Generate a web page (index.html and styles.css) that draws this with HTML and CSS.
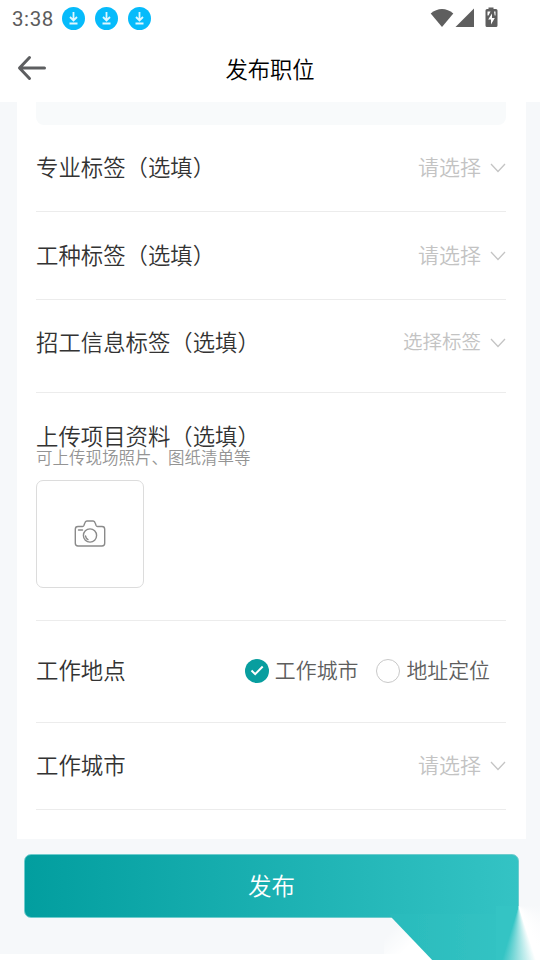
FILE: index.html
```html
<!DOCTYPE html>
<html lang="zh-CN">
<head>
<meta charset="utf-8">
<title>发布职位</title>
<link rel="stylesheet" href="styles.css">
</head>
<body>
<div class="status">
  <span class="time">3:38</span>
  <div class="downloads">
    <svg viewBox="0 0 23 23"><circle cx="11.5" cy="11.5" r="11.5"/><path d="M11.5 5v8M8 10l3.5 3.5L15 10M7.5 16.5h8"/></svg>
    <svg viewBox="0 0 23 23"><circle cx="11.5" cy="11.5" r="11.5"/><path d="M11.5 5v8M8 10l3.5 3.5L15 10M7.5 16.5h8"/></svg>
    <svg viewBox="0 0 23 23"><circle cx="11.5" cy="11.5" r="11.5"/><path d="M11.5 5v8M8 10l3.5 3.5L15 10M7.5 16.5h8"/></svg>
  </div>
  <svg class="signals" viewBox="0 0 68 22">
    <path d="M.7 6.500C7.500 .5 16.500 .5 23.300 6.500L12 20Z"/>
    <path d="M25.500 20L44 1.500V20Z"/>
    <path d="M58.500 .500h5v1.500h2.500q1.500 0 1.500 1.500v15q0 1.500-1.500 1.500h-9q-1.500 0-1.500-1.500V3.500q0-1.500 1.500-1.500H58.500z"/>
    <path class="bolt" d="M62 6.500L58.200 12.500h2.800v5L64.800 11H62zM57.500 4.500h3L58.500 8.500h-1zM64 4.500h1.500V8.500h-.8z"/>
  </svg>
</div>
<header class="nav">
  <svg class="back" viewBox="0 0 30 26"><path d="M27.500 13H3M12.500 2.500L2.500 13L12.500 23.500"/></svg>
  <h1>发布职位</h1>
</header>
<main class="content">
  <section class="card">
    <div class="field-end"></div>
    <div class="row"><span class="label">专业标签（选填）</span><span class="value">请选择</span><svg class="chevron" viewBox="0 0 16 10"><path d="M1 1l7 7.500L15 1"/></svg></div>
    <div class="row"><span class="label">工种标签（选填）</span><span class="value">请选择</span><svg class="chevron" viewBox="0 0 16 10"><path d="M1 1l7 7.500L15 1"/></svg></div>
    <div class="row row-tags"><span class="label">招工信息标签（选填）</span><span class="value small">选择标签</span><svg class="chevron" viewBox="0 0 16 10"><path d="M1 1l7 7.500L15 1"/></svg></div>
    <div class="upload">
      <div class="label">上传项目资料（选填）</div>
      <div class="hint">可上传现场照片、图纸清单等</div>
      <div class="picker">
        <svg viewBox="0 0 32 28"><path d="M4 6.500h4.500q1 0 1.400-1L10.800 3q.6-2 2-2h6.400q1.400 0 2 2l.9 2.500q.4 1 1.400 1H28q2.700 0 2.700 2.700v14.100q0 2.700-2.700 2.700H4q-2.700 0-2.700-2.700V9.200Q1.300 6.500 4 6.500z"/><circle cx="16" cy="15.500" r="6.600"/><path d="M4.500 10h4M11.500 16q.5 2.600 2.500 3.600"/></svg>
      </div>
    </div>
    <div class="row row-place">
      <span class="label">工作地点</span>
      <div class="option"><svg viewBox="0 0 24 24"><circle class="on" cx="12" cy="12" r="12"/><path d="M6.500 11.500l3.700 3.700L17.700 7.500"/></svg><span>工作城市</span></div>
      <div class="option"><svg viewBox="0 0 24 24"><circle class="off" cx="12" cy="12" r="11.500"/></svg><span>地址定位</span></div>
    </div>
    <div class="row row-city"><span class="label">工作城市</span><span class="value">请选择</span><svg class="chevron" viewBox="0 0 16 10"><path d="M1 1l7 7.500L15 1"/></svg></div>
  </section>
  <button class="submit">发布</button>
</main>
<svg class="corner" viewBox="0 0 160 60">
  <defs>
    <linearGradient id="teal" gradientUnits="userSpaceOnUse" x1="10" y1="0" x2="139" y2="0"><stop offset="0" stop-color="#2abbbc"/><stop offset="1" stop-color="#34c4c4"/></linearGradient>
    <linearGradient id="white" gradientUnits="userSpaceOnUse" x1="20" y1="22" x2="48" y2="50"><stop offset="0" stop-color="#fff" stop-opacity="0"/><stop offset=".6" stop-color="#fff"/></linearGradient>
    <filter id="soft" x="-10%" y="-10%" width="120%" height="120%"><feGaussianBlur stdDeviation=".6"/></filter>
  </defs>
  <path fill="url(#white)" d="M4 18H60V60H4z"/>
  <path fill="url(#teal)" filter="url(#soft)" d="M10 14H137.500V64H56L12 18z"/>
</svg>
<div class="glow"></div>
</body>
</html>
```

FILE: styles.css
```css
* { box-sizing: border-box; }
body {
  margin: 0;
  width: 540px;
  height: 960px;
  overflow: hidden;
  display: flex;
  flex-direction: column;
  position: relative;
  background: #fff;
  font-family: "Noto Sans CJK SC DemiLight", "Noto Sans CJK SC", sans-serif;
  color: #333;
}
svg { display: block; flex: none; }
.status {
  height: 36px;
  flex: none;
  display: flex;
  align-items: center;
  padding: 0 42px 0 12px;
}
.time { font: 20.5px/36px Roboto, sans-serif; color: #5c5c5c; width: 50px; padding-top: 1px; letter-spacing: .6px; }
.downloads { display: flex; gap: 10px; }
.downloads svg { width: 23px; height: 23px; }
.downloads circle { fill: #06bbfb; }
.downloads path { fill: none; stroke: #dff7ff; stroke-width: 1.8; }
.signals { width: 68px; height: 22px; margin-left: auto; fill: #5e5e5e; }
.signals .bolt { fill: #fff; }
.nav {
  height: 66px;
  flex: none;
  display: grid;
  grid-template-columns: 30px 1fr 30px;
  align-items: center;
  padding: 0 17px 2px;
}
.back { width: 30px; height: 26px; fill: none; stroke: #5d5e60; stroke-width: 3; stroke-linecap: round; stroke-linejoin: round; }
h1 { margin: 0; padding-bottom: 1px; font-size: 22.3px; font-weight: 400; line-height: 32px; text-align: center; color: #000; }
.content { height: 852px; flex: none; background: #f6f8fa; padding: 0 14px 0 17px; }
.card { height: 737px; background: #fff; padding: 0 20px 0 19px; }
.field-end { height: 23px; background: #f8fafb; border-radius: 0 0 8px 8px; margin-bottom: -1px; }
.row { height: 88px; display: flex; align-items: center; border-bottom: 1px solid #ececec; }
.label { font-size: 22.4px; line-height: 32px; white-space: nowrap; }
.row .label, .value { padding-bottom: 3px; }
.value { margin-left: auto; font-size: 21px; line-height: 32px; color: #c3c3c3; }
.value.small { font-size: 19.5px; }
.chevron { width: 16px; height: 10px; margin-left: 9px; fill: none; stroke: #c4c4c4; stroke-width: 1.3; }
.row-tags { height: 93px; padding-bottom: 7px; }
.upload { height: 228px; padding-top: 30px; border-bottom: 1px solid #ececec; }
.upload .label { line-height: 24px; }
.hint { font-size: 16.5px; line-height: 20px; color: #949494; }
.picker { width: 108px; height: 108px; margin-top: 13px; border: 1px solid #dcdcdc; border-radius: 7px; display: flex; align-items: center; justify-content: center; }
.picker svg { width: 32px; height: 28px; fill: none; stroke: #8a8a8a; stroke-width: 1.4; stroke-linecap: round; }
.row-place { height: 102px; padding-right: 16px; padding-bottom: 2px; gap: 18px; }
.row-place .label { margin-right: auto; padding-bottom: 3px; }
.option { display: flex; align-items: center; gap: 6px; font-size: 20.9px; line-height: 32px; color: #5e5e5e; }
.option svg { width: 24px; height: 24px; }
.option span { padding-bottom: 4px; }
.option .on { fill: #089e9f; }
.option .off { fill: #fff; stroke: #c8c8c8; }
.option path { fill: none; stroke: #fff; stroke-width: 2; }
.row-city { height: 87px; }
.row-city .label, .row-city .value { padding-bottom: 4px; }
.submit {
  display: block;
  width: 495px;
  height: 64px;
  margin: 15px 0 0 7px;
  padding: 0 0 3px;
  border: 1px solid #6fcccd;
  border-radius: 7px;
  background: linear-gradient(90deg, #029e9f, #34c3c4);
  color: #fff;
  font-family: inherit;
  font-size: 23.5px;
  line-height: 34px;
}
.corner { position: absolute; left: 380px; top: 900px; width: 160px; height: 60px; }
/* soft fan of light fading out of the button's lower right corner */
.glow {
  position: absolute;
  left: 496px;
  top: 906px;
  width: 44px;
  height: 54px;
  background: conic-gradient(at 22.500px 0, #f6f8fa 0 90deg, #fff 155deg 162deg, #9be1e1 180deg, #34c4c4 197deg 360deg);
}
```
